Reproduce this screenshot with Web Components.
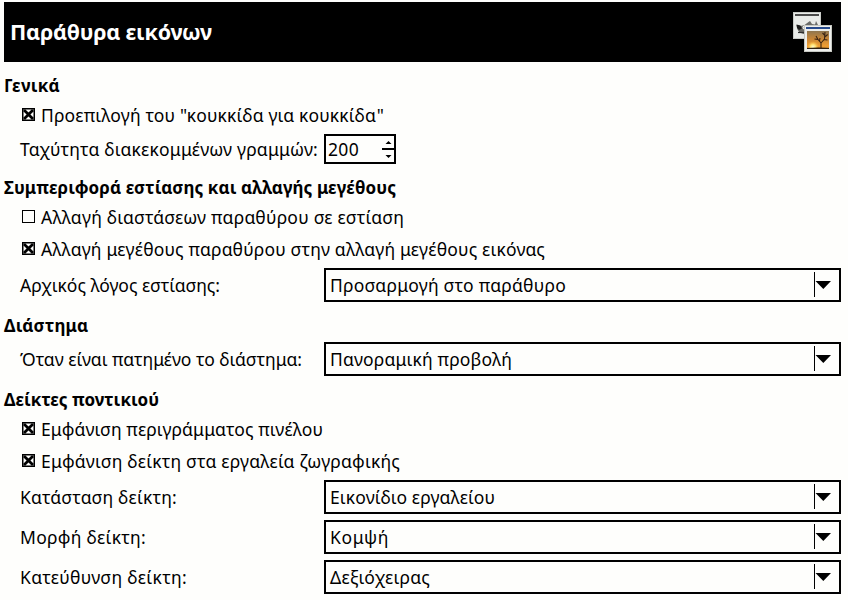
<!DOCTYPE html>
<html lang="el">
<head>
<meta charset="utf-8">
<title>Παράθυρα εικόνων</title>
<style>
html{background:#fefefc}
body{margin:0;padding:2px 7px 0 4px;color:#000;font-family:"Noto Sans","Open Sans",sans-serif;font-size:17.5px}
</style>
</head>
<body>
<prefs-page></prefs-page>
<script>
// Single line of text spaced out to an exact advance width.
class FitText extends HTMLElement {
  connectedCallback() {
    const r = this.attachShadow({mode:'open'});
    r.innerHTML = `<style>:host{display:inline-block;white-space:pre;line-height:24px}span{display:inline-block}</style><span><slot></slot></span>`;
    const w = +this.getAttribute('width'), s = r.querySelector('span');
    if (w) {
      const n = this.textContent.length;
      s.style.letterSpacing = (w - s.getBoundingClientRect().width) / n + 'px';
    }
  }
}
class WindowsIcon extends HTMLElement {
  connectedCallback() {
    this.attachShadow({mode:'open'}).innerHTML = `<style>:host{display:block;width:40px;height:41px}svg{display:block}</style>
<svg width="40" height="41" viewBox="0 0 40 41">
<defs><linearGradient id="s" x1="0" y1="0" x2="0" y2="1"><stop offset="0" stop-color="#8f7650"/><stop offset=".45" stop-color="#c98636"/><stop offset=".85" stop-color="#f0a035"/><stop offset="1" stop-color="#b87526"/></linearGradient>
<radialGradient id="g"><stop offset="0" stop-color="#fffbd0"/><stop offset=".45" stop-color="#ffdf70"/><stop offset="1" stop-color="#f8ac38" stop-opacity="0"/></radialGradient></defs>
<rect x=".5" y=".5" width="27" height="26" fill="#e9ebe8" stroke="#c9cbc7"/>
<rect x="2" y="2" width="24" height="2" fill="#4a4a4a"/>
<path d="M3.500 13l4 1 4-1 4-3 1.500-1 2 3 3 .5 1-3.500 2 4 .5 5-2 3-4 1-9 0-4-1.500-2-3z" fill="#6b6c68"/>
<path d="M3.500 12.500l4 1 1.500 3-3 1.500-2-2z" fill="#1c1c1c"/><path d="M18 14l5-1 1 4-3 3-3 0z" fill="#454542"/>
<circle cx="11.500" cy="15.500" r="2" fill="#f2f2ef"/><circle cx="16" cy="15.500" r="2" fill="#f2f2ef"/><circle cx="11.700" cy="15.500" r=".9"/><circle cx="15.700" cy="15.500" r=".9"/>
<path d="M5 20.500h7" stroke="#2e2e2e" stroke-width="1.200"/>
<rect x="11.500" y="13.500" width="27" height="26" fill="#eeefec" stroke="#c6c8c2"/>
<rect x="13" y="15" width="24" height="2" fill="#284b8c"/>
<rect x="14" y="19" width="22" height="18" fill="url(#s)"/>
<clipPath id="c"><rect x="14" y="19" width="22" height="18"/></clipPath>
<g clip-path="url(#c)"><circle cx="20" cy="35" r="6" fill="url(#g)"/><path d="M14 36q11-1 22 0V37H14z" fill="#30210f"/>
<path d="M28 37V31L25 27.500l-3.500-.5M25 27.500l-2-3.500M28 31l3.500-4 .5-7M31.700 25l3-2.500M31 27.500l3.500 .5M26.500 29l.5-3M31.500 23l-2-2" fill="none" stroke="#3a2312" stroke-width="1.1"/></g>
</svg>`;
  }
}
class PageBanner extends HTMLElement {
  connectedCallback() {
    this.attachShadow({mode:'open'}).innerHTML = `<style>:host{display:flex;align-items:center;justify-content:space-between;box-sizing:border-box;height:60px;padding:0 8px 0 6px;background:#000;color:#fff;font-size:21.5px;font-weight:700}</style>
`;
    const f = document.createElement('fit-text');
    f.setAttribute('width', '202');
    f.textContent = this.textContent;
    this.shadowRoot.append(f, document.createElement('windows-icon'));
  }
}
class PrefGroup extends HTMLElement {
  connectedCallback() {
    this.attachShadow({mode:'open'}).innerHTML = `<style>:host{display:block;padding-top:12px}header{height:24px;font-weight:700;font-size:17px}.rows{padding-left:16px}</style>
<header><fit-text width="${this.getAttribute('width')}">${this.getAttribute('label')}</fit-text></header><div class="rows"><slot></slot></div>`;
  }
}
class CheckRow extends HTMLElement {
  connectedCallback() {
    const on = this.hasAttribute('checked');
    this.attachShadow({mode:'open'}).innerHTML = `<style>:host{display:flex;height:32px;align-items:center;padding-left:2px;gap:6px}svg{display:block;flex:none;margin-top:1px}fit-text{padding-top:1px}</style>
<svg width="13" height="13" viewBox="0 0 13 13"><rect x=".5" y=".5" width="12" height="12" fill="#fefefc" stroke="#000"/>${on ? '<rect x="1" y="1" width="11" height="11" fill="none" stroke="#000" stroke-width="1"/><path d="M2 2L11 11M11 2L2 11" stroke="#000" stroke-width="2.8"/>' : ''}</svg>`;
    const n = document.createElement('fit-text');
    n.setAttribute('width', this.getAttribute('width'));
    n.textContent = this.getAttribute('label');
    this.shadowRoot.append(n);
  }
}
class FieldRow extends HTMLElement {
  connectedCallback() {
    this.attachShadow({mode:'open'}).innerHTML = `<style>:host{display:grid;grid-template-columns:304px 1fr;align-items:center;padding-top:4px}:host([tight]){padding-top:6px}fit-text{padding-bottom:1px}</style>
<fit-text width="${this.getAttribute('width')}">${this.getAttribute('label')}</fit-text><slot></slot>`;
  }
}
class SpinField extends HTMLElement {
  connectedCallback() {
    this.attachShadow({mode:'open'}).innerHTML = `<style>:host{display:flex;box-sizing:border-box;width:72px;height:30px;border:2px solid #000;align-items:center;justify-content:space-between;padding-left:2px}fit-text{padding-bottom:1px}svg{display:block}</style>
<fit-text width="31">${this.getAttribute('value')}</fit-text><svg width="13" height="26" viewBox="0 0 13 26"><path d="M1 12h12v2H1zM4.500 8h6L7.500 5zM4.500 19h6L7.500 22z"/></svg>`;
  }
}
class SelectField extends HTMLElement {
  connectedCallback() {
    this.attachShadow({mode:'open'}).innerHTML = `<style>:host{display:flex;box-sizing:border-box;height:34px;border:2px solid #000;align-items:center;justify-content:space-between;padding:0 8px 0 4px}fit-text{padding-bottom:1px}svg{display:block}</style>
<fit-text width="${this.getAttribute('width')}">${this.getAttribute('value')}</fit-text><svg width="17" height="30" viewBox="0 0 17 30"><path d="M0 2h1v25H0zM1.500 11h15.500L9.300 19z"/></svg>`;
  }
}
class PrefsPage extends HTMLElement {
  connectedCallback() {
    this.attachShadow({mode:'open'}).innerHTML = `<style>:host{display:block}</style>
<page-banner>Παράθυρα εικόνων</page-banner>
<pref-group label="Γενικά" width="56">
<check-row checked label='Προεπιλογή του "κουκκίδα για κουκκίδα"' width="343"></check-row>
<field-row label="Ταχύτητα διακεκομμένων γραμμών:" width="298"><spin-field value="200"></spin-field></field-row>
</pref-group>
<pref-group label="Συμπεριφορά εστίασης και αλλαγής μεγέθους" width="392">
<check-row label="Αλλαγή διαστάσεων παραθύρου σε εστίαση" width="363"></check-row>
<check-row checked label="Αλλαγή μεγέθους παραθύρου στην αλλαγή μεγέθους εικόνας" width="504"></check-row>
<field-row label="Αρχικός λόγος εστίασης:" width="200"><select-field value="Προσαρμογή στο παράθυρο" width="236"></select-field></field-row>
</pref-group>
<pref-group label="Διάστημα" width="84.500">
<field-row label="Όταν είναι πατημένο το διάστημα:" width="282"><select-field value="Πανοραμική προβολή" width="182"></select-field></field-row>
</pref-group>
<pref-group label="Δείκτες ποντικιού" width="155">
<check-row checked label="Εμφάνιση περιγράμματος πινέλου" width="282"></check-row>
<check-row checked label="Εμφάνιση δείκτη στα εργαλεία ζωγραφικής" width="359"></check-row>
<field-row label="Κατάσταση δείκτη:" width="157"><select-field value="Εικονίδιο εργαλείου" width="165"></select-field></field-row>
<field-row tight label="Μορφή δείκτη:" width="126"><select-field value="Κομψή" width="59"></select-field></field-row>
<field-row tight label="Κατεύθυνση δείκτη:" width="167"><select-field value="Δεξιόχειρας" width="100"></select-field></field-row>
</pref-group>`;
  }
}
// Text must be measurable before the elements that wrap it are built.
customElements.define('fit-text', FitText);
customElements.define('windows-icon', WindowsIcon);
customElements.define('page-banner', PageBanner);
customElements.define('pref-group', PrefGroup);
customElements.define('check-row', CheckRow);
customElements.define('field-row', FieldRow);
customElements.define('spin-field', SpinField);
customElements.define('select-field', SelectField);
customElements.define('prefs-page', PrefsPage);
</script>
</body>
</html>
